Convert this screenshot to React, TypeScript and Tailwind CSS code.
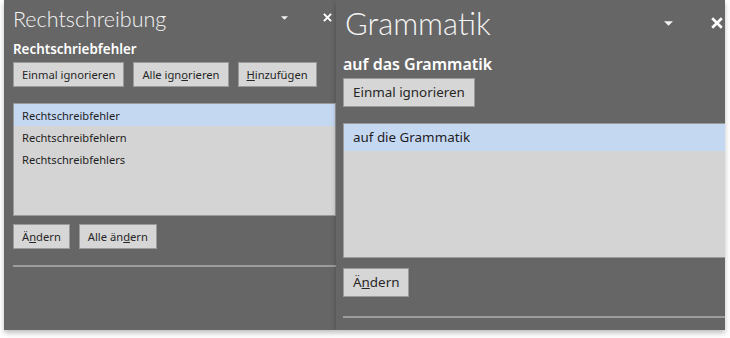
const font = { fontFamily: '"Noto Sans", "Open Sans", sans-serif' };
const titleFont = { fontFamily: 'Lato, "Noto Sans", sans-serif' };

function Btn({ children, big = false }: { children: React.ReactNode; big?: boolean }) {
  return (
    <button
      className={`${
        big ? "h-[29px] px-[9px] text-[13.4px]" : "h-[25px] px-[8px] text-[11.2px]"
      } bg-[#d6d6d6] border border-[#9a9a9a] text-[#262626] leading-none whitespace-nowrap`}
    >
      {children}
    </button>
  );
}

function Caret({ w, h }: { w: number; h: number }) {
  return (
    <svg width={w} height={h} viewBox="0 0 10 5">
      <path d="M0 0 L10 0 L5 5 Z" fill="#f2f2f2" />
    </svg>
  );
}

function Close({ size }: { size: number }) {
  return (
    <svg width={size} height={size} viewBox="0 0 10 10">
      <path d="M1 1 L9 9 M9 1 L1 9" stroke="#ffffff" strokeWidth="2.2" />
    </svg>
  );
}

export default function App() {
  return (
    <div className="w-[730px] h-[338px] bg-white flex pl-[4px]" style={font}>
      {/* Rechtschreibung pane */}
      <div className="w-[332px] h-[330px] bg-[#666666] shadow-[0_3px_5px_rgba(0,0,0,0.25)] flex flex-col pl-[9px] overflow-hidden">
        <div className="flex items-center h-[38px] pt-[1px]">
          <span className="text-[21.5px] font-light text-[#f4f4f4] leading-none" style={titleFont}>
            Rechtschreibung
          </span>
          <div className="ml-auto flex items-center gap-[35px] pr-[4px] -mt-[4px]">
            <Caret w={7} h={4} />
            <Close size={9} />
          </div>
        </div>
        <div className="text-[13.4px] font-semibold text-white leading-none mt-[5px]">Rechtschriebfehler</div>
        <div className="flex gap-[9px] mt-[6px]">
          <Btn>Einmal ignorieren</Btn>
          <Btn>
            Alle ign<span className="underline">o</span>rieren
          </Btn>
          <Btn>
            <span className="underline">H</span>inzufügen
          </Btn>
        </div>
        <div className="mt-[16px] h-[113px] bg-[#d4d4d4] border border-[#9a9a9a] text-[11.1px] text-[#1e1e1e] leading-none">
          <div className="h-[22px] bg-[#c5d8f2] flex items-center pl-[8px]">Rechtschreibfehler</div>
          <div className="h-[22px] flex items-center pl-[8px]">Rechtschreibfehlern</div>
          <div className="h-[22px] flex items-center pl-[8px]">Rechtschreibfehlers</div>
        </div>
        <div className="flex gap-[9px] mt-[8px]">
          <Btn>
            Ä<span className="underline">n</span>dern
          </Btn>
          <Btn>
            Alle än<span className="underline">d</span>ern
          </Btn>
        </div>
        <div className="mt-[16px] h-[2px] bg-[#9c9c9c]" />
      </div>

      {/* Grammatik pane */}
      <div className="w-[389px] h-[330px] bg-[#666666] shadow-[0_3px_5px_rgba(0,0,0,0.25)] flex flex-col pl-[7px] overflow-hidden">
        <div className="flex items-center h-[44px] pt-[2px]">
          <span className="text-[31px] font-light text-[#f4f4f4] leading-none pl-[2px]" style={titleFont}>
            Grammatik
          </span>
          <div className="ml-auto flex items-center gap-[38px] pr-[2px]">
            <Caret w={9} h={5} />
            <Close size={12} />
          </div>
        </div>
        <div className="text-[16px] font-semibold text-white leading-none mt-[12px]">auf das Grammatik</div>
        <div className="flex mt-[6px]">
          <Btn big>Einmal ignorieren</Btn>
        </div>
        <div className="mt-[16px] h-[135px] w-[400px] bg-[#d4d4d4] border border-[#9a9a9a] text-[13.4px] text-[#1e1e1e] leading-none">
          <div className="h-[27px] bg-[#c5d8f2] flex items-center pl-[9px]">auf die Grammatik</div>
        </div>
        <div className="flex mt-[10px]">
          <Btn big>
            Ä<span className="underline">n</span>dern
          </Btn>
        </div>
        <div className="mt-[19px] h-[2px] bg-[#9c9c9c]" />
      </div>
    </div>
  );
}
